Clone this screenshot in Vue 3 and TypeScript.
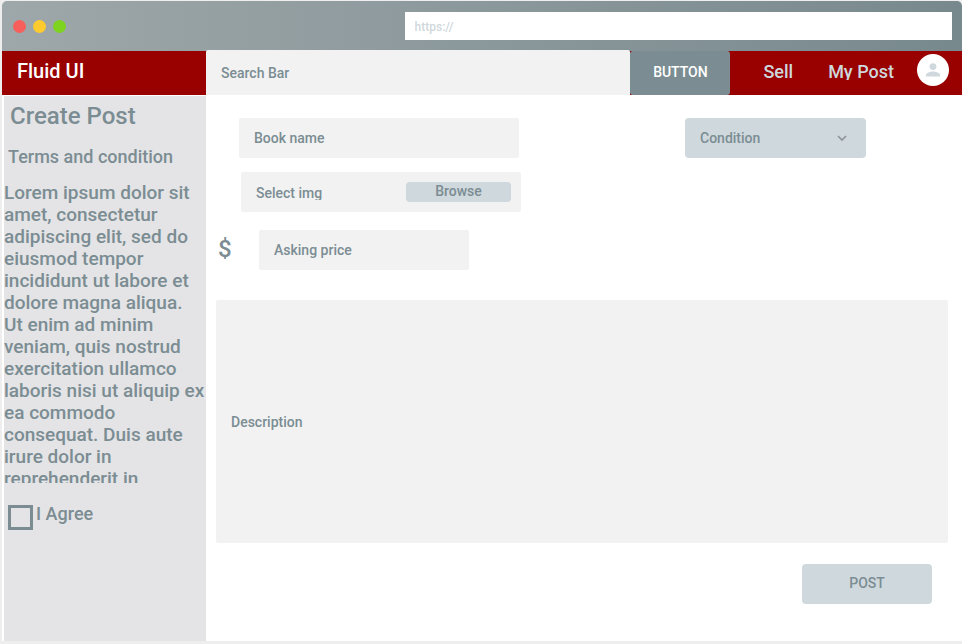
<script setup lang="ts">
import { ref } from 'vue'

const address = ref('')
const search = ref('')
const bookName = ref('')
const price = ref('')
const condition = ref('')
const description = ref('')
const agreed = ref(false)

const terms =
  'Lorem ipsum dolor sit amet, consectetur adipiscing elit, sed do eiusmod tempor incididunt ut labore et dolore magna aliqua. Ut\u00a0enim ad minim veniam, quis nostrud exercitation ullamco laboris nisi ut aliquip ex ea commodo consequat. Duis aute irure dolor in reprehenderit in'
</script>

<template>
  <div class="window">
    <div class="chrome">
      <div class="lights">
        <span class="light red"></span>
        <span class="light yellow"></span>
        <span class="light green"></span>
      </div>
      <input v-model="address" class="address" type="text" placeholder="https://" aria-label="Address" />
    </div>

    <header class="topbar">
      <a class="brand" href="#">Fluid UI</a>
      <input v-model="search" class="search" type="text" placeholder="Search Bar" aria-label="Search Bar" />
      <button class="search-button" type="button">BUTTON</button>
      <nav class="links">
        <a class="nav-link" href="#">Sell</a>
        <a class="nav-link" href="#">My Post</a>
      </nav>
      <a class="avatar" href="#" aria-label="Account">
        <svg viewBox="0 0 32 32" width="32" height="32" aria-hidden="true">
          <circle cx="16" cy="12.6" r="3.4" />
          <path d="M9 22.6v-1.5c0-2.4 4.6-3.7 7-3.7s7 1.3 7 3.7v1.5z" />
        </svg>
      </a>
    </header>

    <div class="body">
      <aside class="sidebar">
        <h1 class="title">Create Post</h1>
        <h2 class="subtitle">Terms and condition</h2>
        <p class="terms">{{ terms }}</p>
        <label class="agree">
          <input v-model="agreed" class="tick" type="checkbox" />
          <span>I Agree</span>
        </label>
      </aside>

      <main class="main">
        <form class="form" @submit.prevent>
          <div class="top-fields">
            <div class="fields">
              <input v-model="bookName" class="field book" type="text" placeholder="Book name" aria-label="Book name" />
              <div class="field file">
                <span id="file-label" class="file-label">Select img</span>
                <button class="browse" type="button" aria-describedby="file-label">Browse</button>
              </div>
              <div class="price-row">
                <label class="currency" for="price">$</label>
                <input id="price" v-model="price" class="field price" type="text" placeholder="Asking price" />
              </div>
            </div>
            <div class="select-wrap">
              <select v-model="condition" class="condition" aria-label="Condition">
                <option value="">Condition</option>
              </select>
              <svg class="chevron" viewBox="0 0 10 6" width="10" height="6" aria-hidden="true">
                <path d="M1 1l4 4 4-4" />
              </svg>
            </div>
          </div>
          <textarea v-model="description" class="description" placeholder="Description" aria-label="Description"></textarea>
          <button class="post" type="submit">POST</button>
        </form>
      </main>
    </div>
  </div>
</template>

<style>
body {
  margin: 0;
  background: #eeeeee;
}
</style>

<style scoped>
* {
  box-sizing: border-box;
}

.window {
  display: flex;
  flex-direction: column;
  min-height: 100vh;
  padding: 1px 0 3px 2px;
  font-family: Roboto, "Liberation Sans", sans-serif;
  font-weight: 500;
  color: #7b8d93;
}

input,
textarea,
select,
button {
  margin: 0;
  border: 0;
  outline: 0;
  font: inherit;
  color: inherit;
}

input::placeholder,
textarea::placeholder {
  color: inherit;
  opacity: 1;
}

a {
  color: inherit;
  text-decoration: none;
}

.chrome {
  display: flex;
  align-items: center;
  justify-content: space-between;
  height: 50px;
  padding: 0 10px 0 11px;
  border-radius: 5px 5px 0 0;
  background: linear-gradient(90deg, #9ea7a9, #78898e);
}

.lights {
  display: flex;
  gap: 7px;
}

.light {
  width: 13px;
  height: 13px;
  border-radius: 50%;
}

.red {
  background: #f75f5c;
}

.yellow {
  background: #fdcb2e;
}

.green {
  background: #7ed321;
}

.address {
  width: calc(60% - 16px);
  height: 28px;
  padding: 2px 10px 0;
  background: #ffffff;
  color: #cfd8dc;
  font-size: 12px;
}

.topbar {
  display: flex;
  height: 44px;
  background: #990000;
}

.brand {
  width: 204px;
  padding-left: 15px;
  color: #ffffff;
  font-size: 20px;
  line-height: 40px;
}

.search {
  flex: 1;
  min-width: 0;
  height: 45px;
  margin-top: -1px;
  padding: 0 15px;
  border-radius: 2px 2px 0 0;
  background: #f2f2f2;
  font-size: 14px;
}

.search-button {
  width: 100px;
  padding: 0 0 2px;
  border-radius: 3px;
  background: #7b8d93;
  color: #ffffff;
  font-size: 14px;
}

.links {
  display: flex;
  gap: 35px;
  padding: 0 23px 0 33px;
  color: #cfd8dc;
  font-size: 18px;
}

.nav-link {
  height: 29px;
  padding-top: 10px;
  line-height: 22px;
  overflow: hidden;
}

.avatar {
  width: 32px;
  height: 32px;
  margin: 3px 13px 0 0;
  border-radius: 50%;
  background: #ffffff;
  fill: #cfd8dc;
}

.avatar svg {
  display: block;
}

.body {
  display: flex;
  flex: 1;
  background: #ffffff;
}

.sidebar {
  width: 202px;
  margin: 1px 0 0 2px;
  background: #e4e4e6;
}

.title {
  margin: 0 0 0 6px;
  font-size: 24px;
  font-weight: 500;
  line-height: 40px;
}

.subtitle {
  margin: 10px 0 0 4px;
  font-size: 18px;
  font-weight: 500;
  line-height: 22px;
}

.terms {
  height: 301px;
  margin: 14px 0 0;
  overflow: hidden;
  font-size: 19px;
  line-height: 22px;
}

.agree {
  display: flex;
  gap: 3px;
  margin: 20px 0 0 4px;
  font-size: 18px;
  line-height: 22px;
}

.tick {
  width: 25px;
  height: 25px;
  margin-top: 2px;
  border: 3px solid #7b8d93;
  appearance: none;
}

.tick:checked {
  background: #7b8d93;
}

.main {
  flex: 1;
  min-width: 0;
}

.form {
  display: flex;
  flex-direction: column;
  padding: 23px 14px 37px 10px;
  font-size: 14px;
}

.top-fields {
  display: flex;
  justify-content: space-between;
  padding-right: 82px;
}

.field {
  width: 280px;
  height: 40px;
  padding: 0 15px;
  border-radius: 2px;
  background: #f2f2f2;
}

.fields {
  display: flex;
  flex-direction: column;
}

.book {
  margin-left: 23px;
}

.file {
  display: flex;
  justify-content: space-between;
  margin: 14px 0 0 25px;
  padding: 10px 10px 10px 15px;
}

.file-label {
  height: 18px;
  line-height: 22px;
  overflow: hidden;
}

.browse {
  width: 105px;
  height: 20px;
  padding: 0 0 2px;
  border-radius: 4px;
  background: #cfd8dd;
  line-height: 18px;
}

.price-row {
  display: flex;
  margin-top: 18px;
}

.currency {
  width: 43px;
  padding-left: 2px;
  font-size: 24px;
  line-height: 38px;
}

.price {
  width: 210px;
}

.select-wrap {
  display: grid;
  align-items: center;
  width: 181px;
  height: 40px;
}

.condition {
  grid-area: 1 / 1;
  width: 100%;
  height: 40px;
  padding: 0 15px;
  border-radius: 4px;
  background: #cfd8dd;
  appearance: none;
}

.chevron {
  grid-area: 1 / 1;
  justify-self: end;
  margin-right: 19px;
  fill: none;
  stroke: #8c9295;
  stroke-width: 1.6;
  pointer-events: none;
}

.description {
  display: block;
  width: 100%;
  height: 243px;
  margin-top: 30px;
  padding: 112px 15px;
  border-radius: 2px;
  background: #f2f2f2;
  line-height: 20px;
  resize: none;
}

.post {
  align-self: flex-end;
  width: 130px;
  height: 40px;
  margin: 21px 16px 0 0;
  padding: 0 0 2px;
  border-radius: 4px;
  background: #cfd8dd;
}
</style>
